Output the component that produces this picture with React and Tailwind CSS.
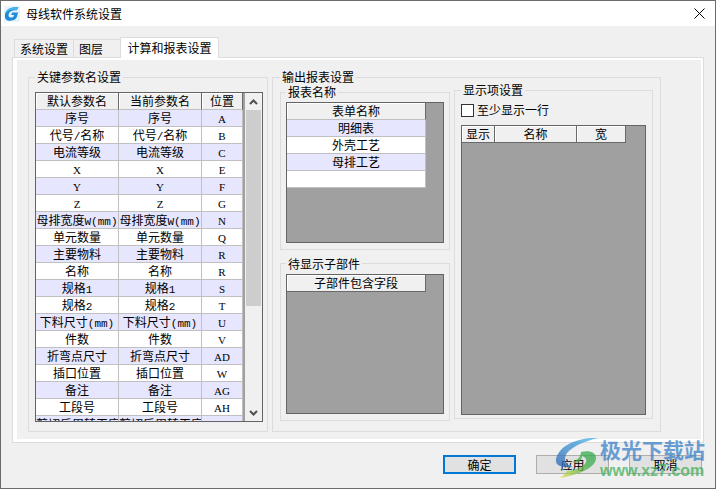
import React, { useState } from "react";

const params = [
  ["序号", "A"],
  ["代号/名称", "B"],
  ["电流等级", "C"],
  ["X", "E"],
  ["Y", "F"],
  ["Z", "G"],
  ["母排宽度W(mm)", "N"],
  ["单元数量", "Q"],
  ["主要物料", "R"],
  ["名称", "R"],
  ["规格1", "S"],
  ["规格2", "T"],
  ["下料尺寸(mm)", "U"],
  ["件数", "V"],
  ["折弯点尺寸", "AD"],
  ["插口位置", "W"],
  ["备注", "AG"],
  ["工段号", "AH"],
  ["剪切后周转工序", "AE"],
];

const reports = ["明细表", "外壳工艺", "母排工艺", ""];

// Latin runs are set in a narrower face than the Chinese text
const CellText = ({ text }) => {
  if (/^[A-Z]+$/.test(text)) {
    return (
      <span className="font-['Liberation_Serif',serif] text-[11px] leading-none">
        {text}
      </span>
    );
  }
  return text.split(/([\x21-\x7e]+)/).map((part, i) =>
    i % 2 ? (
      <span
        key={i}
        className="font-['Liberation_Mono',monospace] text-[11px] leading-none"
      >
        {part}
      </span>
    ) : (
      part
    )
  );
};

const Th = ({ children, className = "" }) => (
  <th
    className={`h-[17px] border-r border-b border-r-[#696969] bg-[#f0f0f0] p-0 text-center leading-4 font-normal whitespace-nowrap shadow-[inset_1px_1px_0_#fff] ${className}`}
  >
    {children}
  </th>
);

const Td = ({ children }) => (
  <td className="h-[17px] overflow-hidden border-r border-b border-[#c0c0c0] p-0 text-center leading-4 whitespace-nowrap">
    {children}
  </td>
);

const Group = ({ title, className = "", children }) => (
  <fieldset className={`min-w-0 border border-[#dcdcdc] ${className}`}>
    <legend className="px-0.5 leading-4">{title}</legend>
    {children}
  </fieldset>
);

const Grid = ({ className = "", children }) => (
  <div
    className={`min-h-0 overflow-hidden border border-[#646464] bg-[#a0a0a0] ${className}`}
  >
    {children}
  </div>
);

const tableClass = "table-fixed border-separate border-spacing-0";

const ScrollBar = () => (
  <div className="ml-0.5 flex min-w-0 flex-1 flex-col bg-[#f0f0f0]">
    <button
      type="button"
      aria-label="向上滚动"
      className="flex h-[17px] items-center justify-center"
    >
      <svg width="9" height="6" viewBox="0 0 9 6" fill="none">
        <path d="M1 5 4.500 1.500 8 5" stroke="#505050" strokeWidth="2" />
      </svg>
    </button>
    <div className="flex-1 px-px">
      <div className="h-2/3 bg-[#cdcdcd]" />
    </div>
    <button
      type="button"
      aria-label="向下滚动"
      className="flex h-[17px] items-center justify-center"
    >
      <svg width="9" height="6" viewBox="0 0 9 6" fill="none">
        <path d="M1 1 4.500 4.500 8 1" stroke="#505050" strokeWidth="2" />
      </svg>
    </button>
  </div>
);

const Logo = () => (
  <svg width="16" height="16" viewBox="0 0 16 16">
    <rect width="16" height="16" fill="#e6f4fc" />
    <path
      d="M14.500 1.500C8 .5 2 3 1 8.500c-.8 4.800 2 6.500 5.500 6.200 3.500-.2 6-1.700 6.500-4.200l1-4H8L7.300 9h2.900c-.4 1.700-1.500 2.600-3.200 2.600-2 0-2.700-1.200-2.300-3.300C5.300 5.500 8 4.200 12.500 4.200Z"
      fill="#2189d8"
    />
    <path d="M14.500 1.500C8 .5 2 3 1 8.500 3 5 7 3 12.500 4.200Z" fill="#49b4ee" />
  </svg>
);

const Watermark = () => (
  <div className="pointer-events-none absolute right-2.5 bottom-[7px] flex items-start gap-px opacity-75">
    <svg width="44" height="42" viewBox="0 0 44 42">
      <defs>
        <linearGradient id="blueArc" x1="0" y1="1" x2="1" y2="0">
          <stop offset="0" stopColor="#2b62b4" />
          <stop offset="1" stopColor="#45b8ea" />
        </linearGradient>
        <linearGradient id="greenArc" x1="0" y1="1" x2="1" y2="0">
          <stop offset="0" stopColor="#e9e04c" />
          <stop offset="0.600" stopColor="#3fae4c" />
          <stop offset="1" stopColor="#2fa84c" />
        </linearGradient>
      </defs>
      <path
        d="M43 1C24 0 4 8 1 22c-1 6 4 9 17 8-8-2-10-8-6-14C18 9 30 4 43 1Z"
        fill="url(#blueArc)"
      />
      <path
        d="M17 25c7-2 9-7 9-10 8-2 15 0 15 6 0 9-16 17-37 20 4-2 6-4 8-7 9-1 17-4 19-9 1-3-1-5-4-6 0 5-4 8-10 6Z"
        fill="url(#greenArc)"
      />
    </svg>
    <div>
      <div className="text-[21px] leading-6 font-bold text-[#3b82c8]">
        极光下载站
      </div>
      <div className="font-['Liberation_Sans',sans-serif] text-base leading-5 font-bold text-[#43b05c]">
        www.xz7.com
      </div>
    </div>
  </div>
);

const App = () => {
  const [showOne, setShowOne] = useState(false);

  return (
    <div className="relative flex h-screen flex-col border border-[#6b6b6b] bg-[#f0f0f0] font-['Noto_Sans_CJK_SC',sans-serif] text-xs text-black">
      <header className="flex h-[25px] shrink-0 items-center gap-1.5 bg-white pr-2.5 pl-[3px]">
        <Logo />
        <h1 className="flex-1 leading-4">母线软件系统设置</h1>
        <button type="button" aria-label="关闭">
          <svg width="11" height="11" viewBox="0 0 11 11">
            <path d="M.5.5l10 10M10.500.5l-10 10" stroke="#000" />
          </svg>
        </button>
      </header>

      <main className="flex min-h-0 flex-1 flex-col px-[11px] pt-[11px] pb-3.5">
        <div role="tablist" className="flex items-end pl-0.5">
          <button
            type="button"
            role="tab"
            className="h-[18px] w-[59px] border-t border-l border-[#dcdcdc] leading-4"
          >
            系统设置
          </button>
          <button
            type="button"
            role="tab"
            className="h-[18px] w-[47px] border-t border-l border-[#dcdcdc] pl-[5px] text-left leading-4"
          >
            图层
          </button>
          <button
            type="button"
            role="tab"
            aria-selected="true"
            className="relative -mb-px h-[21px] w-[99px] border-x border-t border-[#dcdcdc] bg-white leading-4"
          >
            计算和报表设置
          </button>
        </div>

        <div className="flex min-h-0 flex-1 border border-[#dcdcdc] bg-white pt-0.5 pr-0.5 pb-[3px] pl-1">
          <div className="flex min-w-0 flex-1 gap-1 bg-[#f0f0f0] pt-[9px] pr-10 pb-[7px] pl-[11px]">
            <Group
              title="关键参数名设置"
              className="flex w-60 shrink-0 flex-col pt-[7px] pr-1 pb-[9px] pl-1.5"
            >
              <Grid className="flex flex-1">
                <table className={`${tableClass} w-[207px] shrink-0 self-start`}>
                  <thead>
                    <tr>
                      <Th className="w-[83px] border-b-[#c0c0c0]">默认参数名</Th>
                      <Th className="w-[83px] border-b-[#c0c0c0]">当前参数名</Th>
                      <Th className="w-[41px] border-b-[#c0c0c0]">位置</Th>
                    </tr>
                  </thead>
                  <tbody>
                    {params.map(([name, pos], i) => (
                      <tr key={i} className="bg-white odd:bg-[#e6e6ff]">
                        <Td>
                          <CellText text={name} />
                        </Td>
                        <Td>
                          <CellText text={name} />
                        </Td>
                        <Td>
                          <CellText text={pos} />
                        </Td>
                      </tr>
                    ))}
                  </tbody>
                </table>
                <ScrollBar />
              </Grid>
            </Group>

            <Group
              title="输出报表设置"
              className="flex min-w-0 flex-1 flex-col px-[7px] pb-2.5"
            >
              <div className="flex min-h-0 flex-1 gap-1">
                <div className="-mt-px flex w-[170px] shrink-0 flex-col gap-1.5">
                  <Group
                    title="报表名称"
                    className="flex min-h-0 flex-1 flex-col px-[5px] pt-0.5 pb-1.5"
                  >
                    <Grid className="flex-1">
                      <table className={`${tableClass} w-[139px]`}>
                        <thead>
                          <tr>
                            <Th className="border-b-[#c0c0c0]">表单名称</Th>
                          </tr>
                        </thead>
                        <tbody>
                          {reports.map((name, i) => (
                            <tr key={i} className="bg-white odd:bg-[#e6e6ff]">
                              <Td>{name}</Td>
                            </tr>
                          ))}
                        </tbody>
                      </table>
                    </Grid>
                  </Group>
                  <Group
                    title="待显示子部件"
                    className="flex min-h-0 flex-1 flex-col px-[5px] pt-0.5 pb-1.5"
                  >
                    <Grid className="flex-1">
                      <table className={`${tableClass} w-[139px]`}>
                        <thead>
                          <tr>
                            <Th className="border-b-[#696969]">子部件包含字段</Th>
                          </tr>
                        </thead>
                      </table>
                    </Grid>
                  </Group>
                </div>

                <Group
                  title="显示项设置"
                  className="-mt-[3px] mb-0.5 flex flex-1 flex-col px-1.5 pb-[3px]"
                >
                  <label className="mt-1 mb-[7px] flex items-center gap-[3px] leading-4">
                    <input
                      type="checkbox"
                      checked={showOne}
                      onChange={(e) => setShowOne(e.target.checked)}
                      className="size-[13px] appearance-none border border-[#333] bg-white checked:bg-[#0078d7]"
                    />
                    至少显示一行
                  </label>
                  <Grid className="flex-1">
                    <table className={`${tableClass} w-[164px]`}>
                      <thead>
                        <tr>
                          <Th className="w-[33px] border-b-[#696969]">显示</Th>
                          <Th className="w-[82px] border-b-[#696969]">名称</Th>
                          <Th className="w-[49px] border-b-[#696969]">宽</Th>
                        </tr>
                      </thead>
                    </table>
                  </Grid>
                </Group>
              </div>
            </Group>
          </div>
        </div>

        <div className="mt-3 flex justify-end gap-5 pr-0.5">
          <button
            type="button"
            className="h-[19px] w-[73px] border-2 border-[#0078d7] bg-[#e1e1e1] leading-none"
          >
            确定
          </button>
          <button
            type="button"
            className="h-[19px] w-[73px] border border-[#adadad] bg-[#e1e1e1] leading-none"
          >
            应用
          </button>
          <button
            type="button"
            className="h-[19px] w-[73px] border border-[#adadad] bg-[#e1e1e1] leading-none"
          >
            取消
          </button>
        </div>
      </main>

      <Watermark />
    </div>
  );
};

export default App;
